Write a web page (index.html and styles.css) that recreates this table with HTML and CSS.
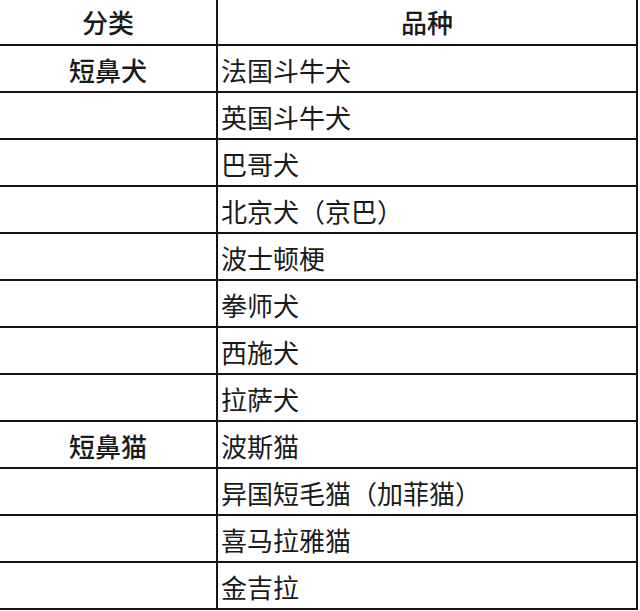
FILE: index.html
```html
<!DOCTYPE html>
<html lang="zh-CN">
<head>
<meta charset="utf-8">
<title>短鼻品种</title>
<link rel="stylesheet" href="styles.css">
</head>
<body>
<table class="breeds">
  <thead>
    <tr><th class="cat">分类</th><th class="name">品种</th></tr>
  </thead>
  <tbody>
    <tr><td class="cat">短鼻犬</td><td class="name">法国斗牛犬</td></tr>
    <tr><td class="cat"></td><td class="name">英国斗牛犬</td></tr>
    <tr><td class="cat"></td><td class="name">巴哥犬</td></tr>
    <tr><td class="cat"></td><td class="name">北京犬（京巴）</td></tr>
    <tr><td class="cat"></td><td class="name">波士顿梗</td></tr>
    <tr><td class="cat"></td><td class="name">拳师犬</td></tr>
    <tr><td class="cat"></td><td class="name">西施犬</td></tr>
    <tr><td class="cat"></td><td class="name">拉萨犬</td></tr>
    <tr><td class="cat">短鼻猫</td><td class="name">波斯猫</td></tr>
    <tr><td class="cat"></td><td class="name">异国短毛猫（加菲猫）</td></tr>
    <tr><td class="cat"></td><td class="name">喜马拉雅猫</td></tr>
    <tr><td class="cat"></td><td class="name">金吉拉</td></tr>
  </tbody>
</table>
</body>
</html>
```
FILE: styles.css
```css
html, body {
  margin: 0;
  padding: 0;
  background: #ffffff;
  overflow: hidden;
}

.breeds {
  margin: -2px 0 0 -2px;
  border-collapse: separate;
  border-spacing: 0;
  border-top: 2px solid #141414;
  border-left: 2px solid #141414;
  table-layout: fixed;
  width: 640px;
  font-family: "Noto Sans CJK SC", "Noto Sans", sans-serif;
  font-size: 26px;
  color: #1a1a1a;
}

.breeds th,
.breeds td {
  border-right: 2px solid #141414;
  border-bottom: 2px solid #141414;
  padding: 0;
  line-height: 1;
  white-space: nowrap;
  box-sizing: border-box;
}

.breeds th {
  height: 46px;
  font-weight: 500;
  vertical-align: middle;
}

.breeds td {
  height: 47px;
  vertical-align: middle;
  padding-top: 3px;
}

.breeds .cat {
  width: 218px;
  text-align: center;
  font-weight: 500;
}

.breeds th.name {
  text-align: center;
}

.breeds td.name {
  text-align: left;
  padding-left: 3px;
  font-weight: 400;
}
```
